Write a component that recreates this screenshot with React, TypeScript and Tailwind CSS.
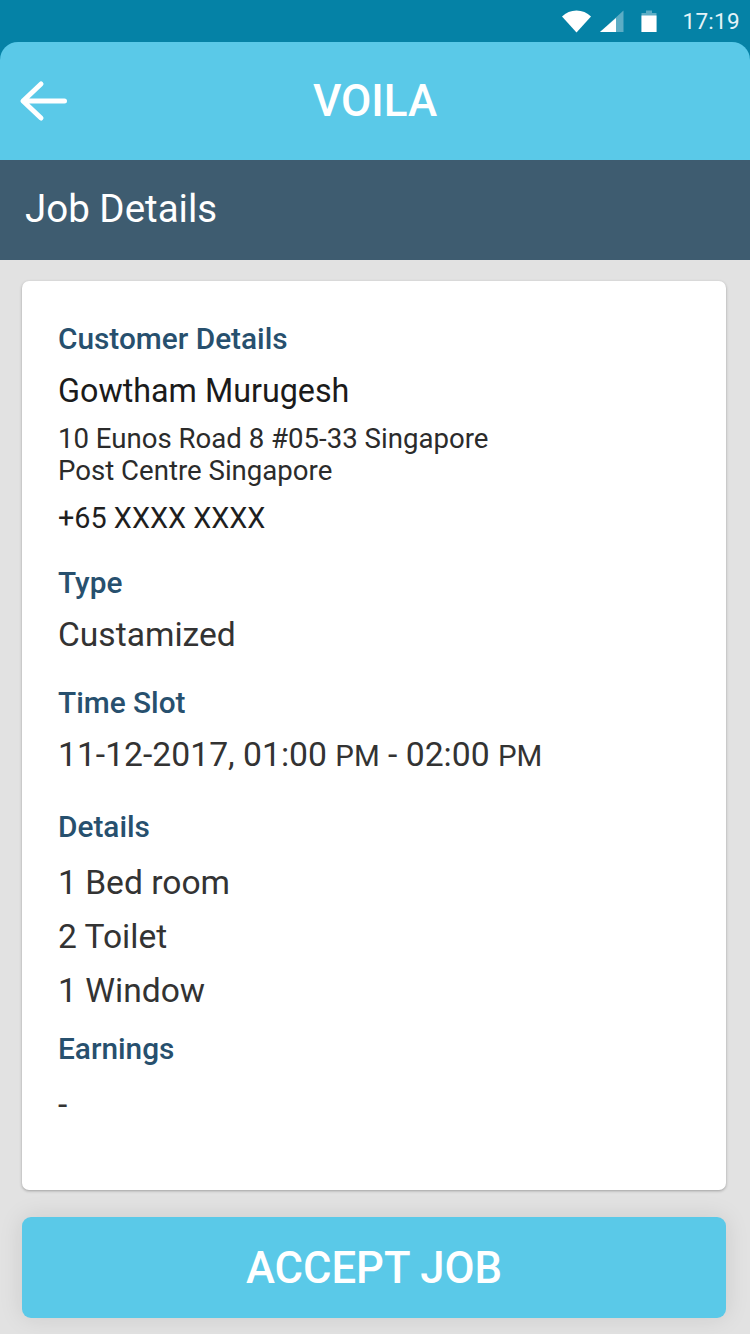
import type { ReactNode } from "react";

function Label({ children, className = "" }: { children: ReactNode; className?: string }) {
  return <h3 className={`text-[29.800px] leading-[34px] font-medium text-[#27506e] ${className}`}>{children}</h3>;
}

function StatusIcons() {
  return (
    <div className="flex items-center text-white">
      <svg width="32" height="24" viewBox="0 0 32 24" className="mr-[6px]">
        <path d="M1 7.5C4.8 3.6 10 1.5 15.5 1.5S26.200 3.6 30 7.500L15.500 23.500Z" fill="#ffffff" />
      </svg>
      <svg width="26" height="24" viewBox="0 0 26 24" className="mr-[16px]">
        <path d="M24.500 1.500V23H1Z" fill="#ffffff" fillOpacity="0.35" />
        <path d="M17 9V23H1Z" fill="#ffffff" />
      </svg>
      <svg width="16" height="24" viewBox="0 0 16 24" className="mr-[25px]">
        <path d="M5 1.500H11V4H15.500V23H.5V4H5Z" fill="#ffffff" fillOpacity="0.35" />
        <path d="M.5 6.500H15.500V23H.5Z" fill="#ffffff" />
      </svg>
      <span className="text-[22.500px] leading-none font-normal tracking-[0.3px] text-[#e3f3f8]">17:19</span>
    </div>
  );
}

export default function App() {
  return (
    <div className="flex h-[1334px] w-[750px] flex-col overflow-hidden bg-[#e2e2e2] font-['Roboto',sans-serif]">
      <div className="relative h-[60px] shrink-0 bg-[#0582a6]">
        <div className="flex h-[42px] items-center justify-end pr-[10px]">
          <StatusIcons />
        </div>
      </div>
      <header className="relative -mt-[18px] flex h-[118px] shrink-0 items-center justify-center rounded-t-[18px] bg-[#5ac9e8]">
        <svg width="50" height="42" viewBox="0 0 50 42" fill="none" className="absolute left-[19px] top-[38px]">
          <path d="M45.500 21H8M22 4 4 21 22 38" stroke="#ffffff" strokeWidth="5" strokeLinecap="round" strokeLinejoin="round" />
        </svg>
        <h1 className="text-[44px] leading-none font-medium text-white">VOILA</h1>
      </header>
      <div className="flex h-[100px] shrink-0 items-center bg-[#3e5c70] pb-[1px] pl-[25px]">
        <h2 className="text-[38.500px] leading-none font-normal text-white">Job Details</h2>
      </div>
      <main className="flex min-h-0 flex-1 flex-col pl-[22px] pr-[24px] pt-[21px]">
        <section className="h-[909px] rounded-[7px] bg-white pl-[36px] pt-[41px] shadow-[0_1px_3px_rgba(0,0,0,0.3)]">
          <Label>Customer Details</Label>
          <p className="mt-[17px] text-[32.300px] leading-[36px] text-[#1b1b1b]">Gowtham Murugesh</p>
          <p className="mt-[14px] text-[27.600px] leading-[32px] text-[#2b2b2b]">
            10 Eunos Road 8 #05-33 Singapore
            <br />
            Post Centre Singapore
          </p>
          <p className="mt-[14px] text-[28.800px] leading-[34px] text-[#1f1f1f]">+65 XXXX XXXX</p>
          <Label className="mt-[31px]">Type</Label>
          <p className="mt-[16px] text-[33.600px] leading-[38px] text-[#333333]">Custamized</p>
          <Label className="mt-[32px]">Time Slot</Label>
          <p className="mt-[16px] text-[33.700px] leading-[38px] text-[#333333]">
            11-12-2017, 01:00 <span className="text-[29.500px]">PM</span> - 02:00 <span className="text-[29.500px]">PM</span>
          </p>
          <Label className="mt-[35px]">Details</Label>
          <ul className="mt-[20px] flex flex-col gap-[16px] text-[33.600px] leading-[38px] text-[#333333]">
            <li>1 Bed room</li>
            <li>2 Toilet</li>
            <li>1 Window</li>
          </ul>
          <Label className="mt-[22px]">Earnings</Label>
          <p className="mt-[20px] text-[33.600px] leading-[38px] text-[#333333]">-</p>
        </section>
        <button className="mt-[27px] flex h-[101px] shrink-0 items-center justify-center rounded-[9px] bg-[#5ac9e8] pt-[2px] text-[43.600px] font-medium text-white shadow-[0_0_24px_rgba(0,0,0,0.1)]">
          ACCEPT JOB
        </button>
      </main>
    </div>
  );
}
